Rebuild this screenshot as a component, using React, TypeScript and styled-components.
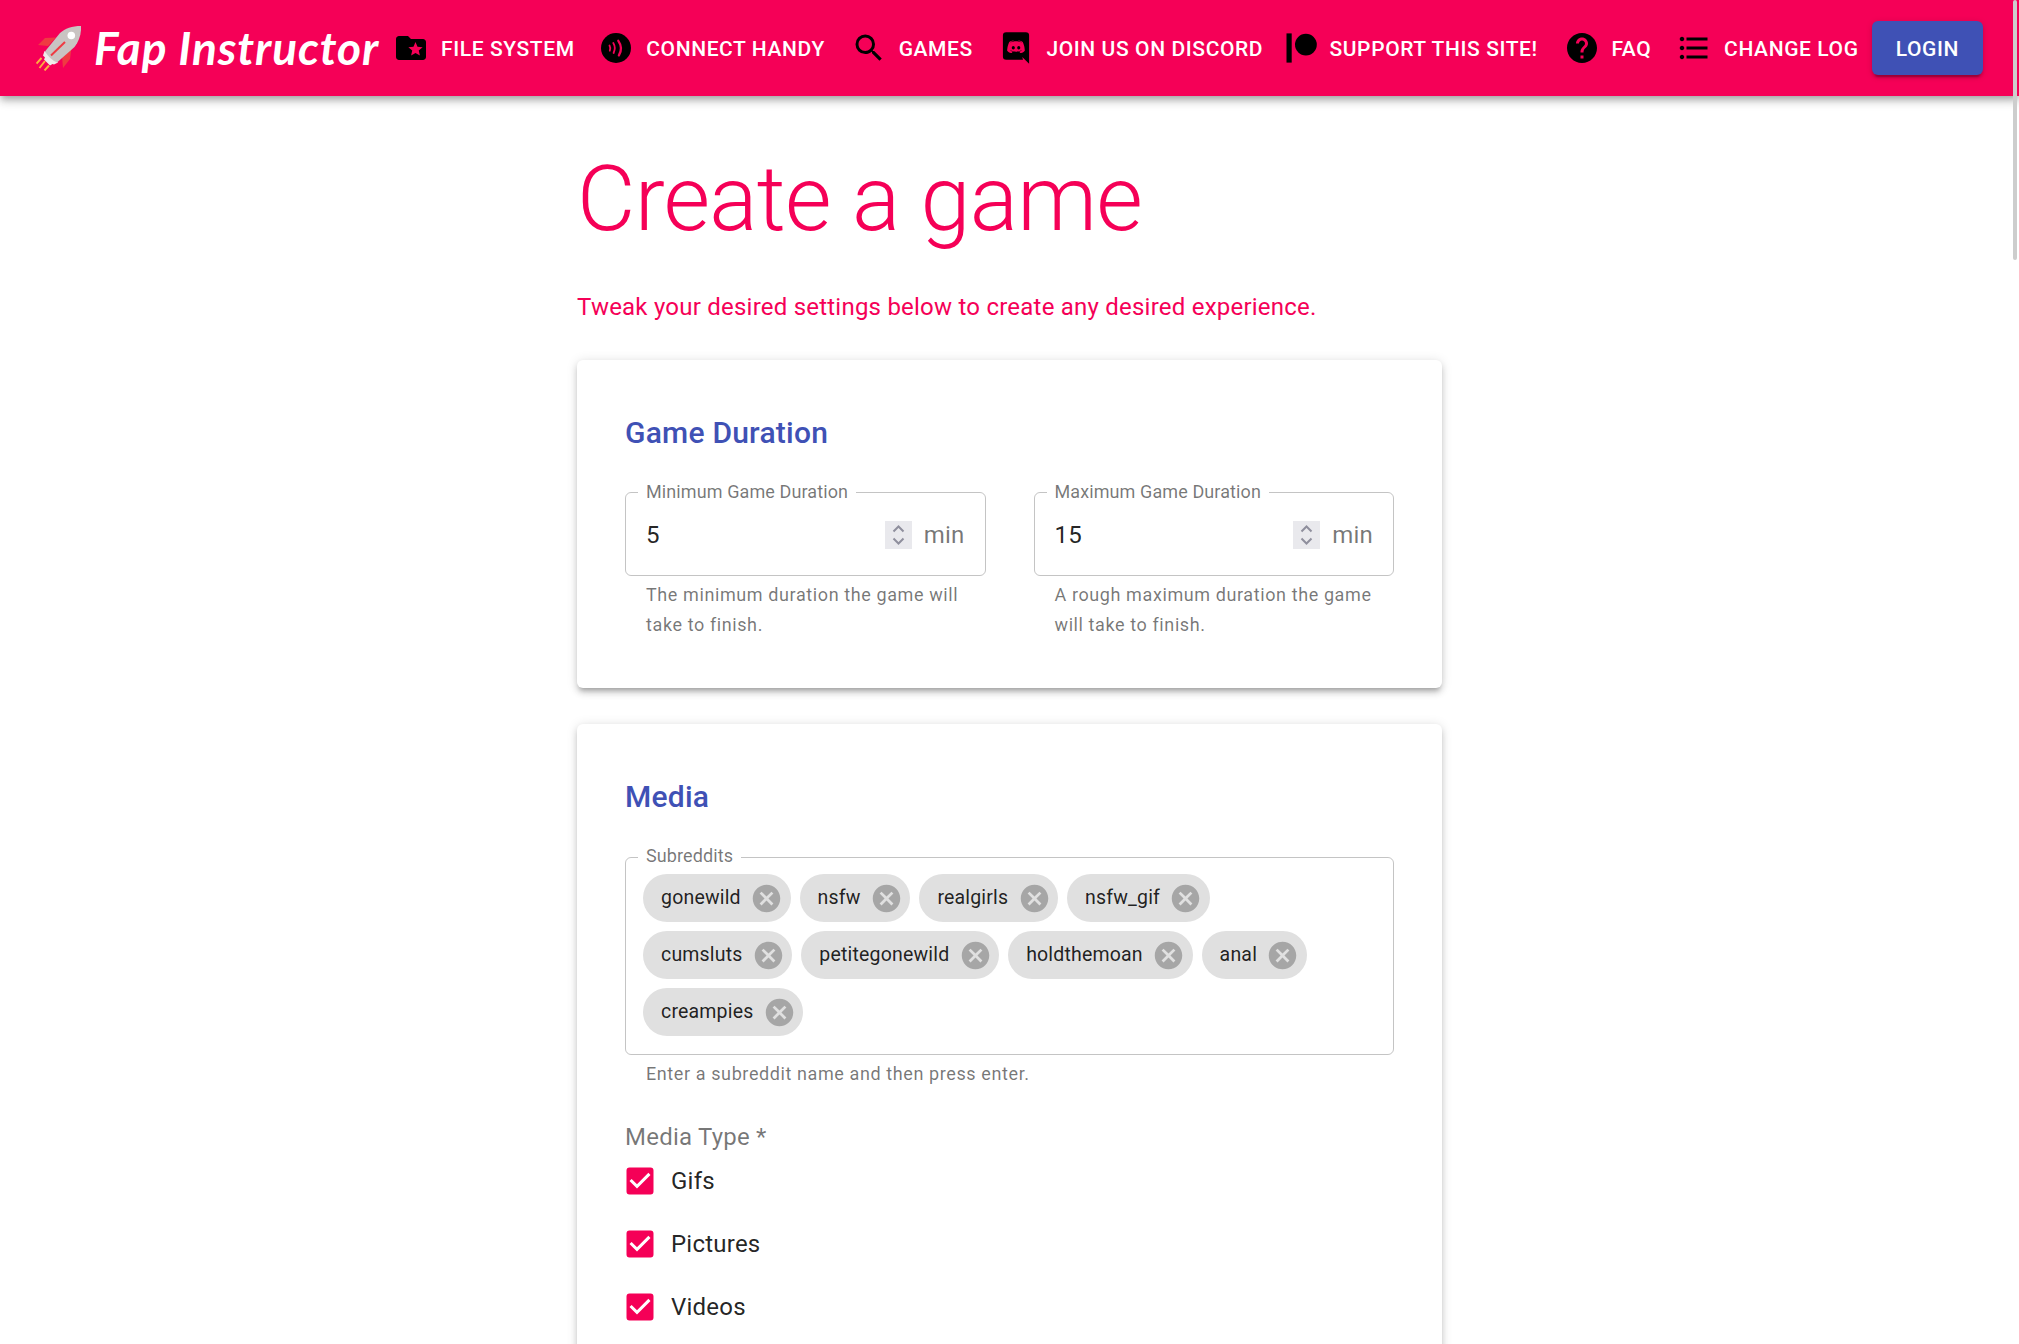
import React from "react";
import styled, { createGlobalStyle } from "styled-components";
import {
  MdFolderSpecial,
  MdSearch,
  MdHelp,
  MdFormatListBulleted,
  MdCheckBox,
  MdCancel,
} from "react-icons/md";

const PINK = "#f50057";
const INDIGO = "#3f51b5";

const GlobalStyle = createGlobalStyle`
  * { box-sizing: border-box; }
  html, body { height: 100%; overflow: hidden; }
  body {
    margin: 0;
    background: #fff;
    color: rgba(0, 0, 0, 0.87);
    font-family: Roboto, "Liberation Sans", sans-serif;
    font-size: 24px;
    line-height: 36px;
    letter-spacing: 0.00938em;
  }
`;

const Page = styled.div`
  height: 1344px;
  overflow: hidden;
`;

const AppBar = styled.header`
  position: relative;
  display: flex;
  align-items: center;
  height: 96px;
  padding: 0 36px;
  background: ${PINK};
  box-shadow: 0 3px 6px -1.5px rgba(0, 0, 0, 0.2), 0 6px 7.5px rgba(0, 0, 0, 0.14),
    0 1.5px 15px rgba(0, 0, 0, 0.12);
`;

const Brand = styled.div`
  display: flex;
  flex: none;
  align-items: center;
  width: 351px;
  height: 96px;
`;

const Rocket = styled.svg`
  flex: none;
  width: 45px;
  height: 45px;
  margin-right: 13px;
`;

const Wordmark = styled.span`
  color: #fff;
  font-family: Lato, "Liberation Sans", sans-serif;
  font-style: italic;
  font-weight: 700;
  font-size: 46px;
  line-height: 60px;
  letter-spacing: 0.9px;
  white-space: nowrap;
`;

const Nav = styled.nav`
  display: flex;
  flex: 1;
  align-items: center;
`;

const NavButton = styled.a<{ $gap: number }>`
  display: flex;
  flex: none;
  align-items: center;
  gap: 12px;
  margin-left: ${(p) => p.$gap}px;
  padding: 0 12px 0 6px;
  color: #fff;
  font-size: 21px;
  font-weight: 500;
  line-height: 36px;
  letter-spacing: 0.02857em;
  text-transform: uppercase;
  white-space: nowrap;

  svg {
    width: 36px;
    height: 36px;
    color: #000;
  }
`;

const NavLabel = styled.span`
  padding-top: 2px;
`;

const Login = styled.button`
  height: 54px;
  margin-left: auto;
  padding: 2px 24px 0;
  border: 0;
  border-radius: 6px;
  background: ${INDIGO};
  color: #fff;
  font: 500 21px/36px Roboto, sans-serif;
  letter-spacing: 0.02857em;
  box-shadow: 0 4.5px 1.5px -3px rgba(0, 0, 0, 0.2), 0 3px 3px rgba(0, 0, 0, 0.14),
    0 1.5px 7.5px rgba(0, 0, 0, 0.12);
`;

const Content = styled.main`
  width: 865px;
  margin: 0 0 0 577px;
  padding-top: 50px;
`;

const Title = styled.h1`
  margin: 0;
  color: ${PINK};
  font-size: 90px;
  font-weight: 300;
  line-height: 108px;
  letter-spacing: -0.00833em;
`;

const Intro = styled.p`
  margin: 35px 0;
  color: ${PINK};
`;

const Card = styled.section`
  margin-bottom: 36px;
  padding: 49px 48px 48px;
  border-radius: 6px;
  background: #fff;
  box-shadow: 0 4.5px 4.5px -3px rgba(0, 0, 0, 0.2), 0 4.5px 6px rgba(0, 0, 0, 0.14),
    0 1.5px 12px rgba(0, 0, 0, 0.12);
`;

const CardTitle = styled.h2`
  margin: 0 0 26px;
  color: ${INDIGO};
  font-size: 30px;
  font-weight: 500;
  line-height: 48px;
  letter-spacing: 0.0075em;
`;

const FieldRow = styled.div`
  display: grid;
  grid-template-columns: 1fr 1fr;
  gap: 48px;
`;

const TagField = styled.div`
  padding-top: 1px;
`;

const Outline = styled.fieldset<{ $height: number }>`
  min-width: 0;
  height: ${(p) => p.$height}px;
  margin: 0;
  padding: 0 12px;
  border: 1px solid rgba(0, 0, 0, 0.23);
  border-radius: 6px;
`;

const Legend = styled.legend<{ $line?: number }>`
  height: 18px;
  padding: 0 8px;
  color: rgba(0, 0, 0, 0.54);
  font-size: 18px;
  line-height: ${(p) => p.$line ?? 18}px;
  letter-spacing: 0.1px;
`;

const NumberRow = styled.div`
  display: flex;
  align-items: center;
  height: 67px;
  padding: 0 8px;
`;

const NumberValue = styled.span`
  flex: 1;
`;

const Stepper = styled.svg`
  width: 27px;
  height: 28px;
  margin-right: 12px;
  background: #e9e9ed;
`;

const Unit = styled.span`
  color: rgba(0, 0, 0, 0.54);
`;

const Helper = styled.p`
  margin: 4px 21px 0;
  color: rgba(0, 0, 0, 0.54);
  font-size: 18px;
  line-height: 30px;
  letter-spacing: 0.03333em;
`;

const Chips = styled.div`
  display: flex;
  flex-wrap: wrap;
  gap: 9px;
  width: 700px;
  padding: 8px 0 0 5px;
`;

const Chip = styled.span`
  display: flex;
  align-items: center;
  height: 48px;
  padding: 0 7.5px 0 18px;
  border-radius: 24px;
  background: #e0e0e0;
  font-size: 19.5px;
  letter-spacing: 0.00938em;

  svg {
    width: 33px;
    height: 33px;
    margin-left: 9.3px;
    color: rgba(0, 0, 0, 0.26);
  }
`;

const GroupLabel = styled.div`
  margin-top: 36px;
  color: rgba(0, 0, 0, 0.54);
  line-height: 24px;
`;

const Option = styled.label`
  display: flex;
  align-items: center;
  gap: 13px;
  height: 63px;
  margin-left: -3px;

  svg {
    width: 36px;
    height: 36px;
    color: ${PINK};
  }
`;

const ScrollThumb = styled.div`
  position: absolute;
  top: 0;
  right: 2px;
  width: 4px;
  height: 260px;
  border-radius: 2px;
  background: #cdcdcd;
`;

const HandyIcon = () => (
  <svg viewBox="0 0 36 36">
    <circle cx="18" cy="18" r="15" fill="#000" />
    <g fill="none" stroke={PINK} strokeWidth="1.8" strokeLinecap="round">
      <path d="M11.500 15.500q1.400 2.500 .3 5.200" />
      <path d="M15.300 13q2.800 4.600 .3 10" />
      <path d="M20.300 10.800q5 7 .6 14.600" strokeWidth="2.300" />
    </g>
  </svg>
);

const DiscordIcon = () => (
  <svg viewBox="-1.75 -1.7 27.5 27.5" fill="#000">
    <path d="M22 24l-5.25-5 .63 2H4.500A2.500 2.500 0 0 1 2 18.500v-16A2.500 2.500 0 0 1 4.500 0h15A2.500 2.500 0 0 1 22 2.500V24M12 6.800c-2.680 0-4.560 1.150-4.560 1.150 1.030-.92 2.830-1.450 2.830-1.450l-.17-.17c-1.690.03-3.220 1.200-3.220 1.200-1.720 3.590-1.610 6.690-1.610 6.690 1.400 1.810 3.480 1.680 3.480 1.680l.71-.9c-1.250-.27-2.040-1.380-2.040-1.380S9.300 14.900 12 14.900s4.580-1.280 4.580-1.280-.79 1.110-2.040 1.380l.71.9s2.080.13 3.480-1.680c0 0 .11-3.100-1.610-6.690 0 0-1.530-1.170-3.220-1.200l-.17.17s1.800.53 2.830 1.450c0 0-1.880-1.150-4.560-1.150m-2.070 3.790c.65 0 1.180.57 1.170 1.270 0 .69-.52 1.270-1.170 1.270-.64 0-1.160-.58-1.160-1.270 0-.7.51-1.270 1.160-1.270m4.170 0c.65 0 1.170.57 1.170 1.270 0 .69-.52 1.270-1.170 1.270-.64 0-1.160-.58-1.160-1.270 0-.7.51-1.270 1.160-1.270z" />
  </svg>
);

const PatreonIcon = () => (
  <svg viewBox="0 0 36 36" fill="#000">
    <rect x="5.5" y="3.4" width="5.2" height="29.2" />
    <circle cx="24.900" cy="14.600" r="10.900" />
  </svg>
);

const RocketIcon = () => (
  <Rocket viewBox="0 0 45 45" fill="none">
    <path d="M20 11.500 9 12 2 19l10 1zM35.500 22 34 33l-7 9-1-12z" fill="#ef3b42" />
    <path d="m8.500 25-1.500 4.500 2 2-1 2 6 6 2.500-1.500 1.500.5 4-2z" fill="#efebea" />
    <path d="M45 0C36 0 29 2.500 24 7L9 25.500q5 8 12 11L38.500 21C43 15 45.500 8 45 0z" fill="#c9c4c2" />
    <circle cx="35.300" cy="9.500" r="3.800" fill="#fff" />
    <path d="M29 16 15 29.500" stroke="#ef3b42" strokeWidth="2" />
    <path
      d="m5.500 32-5 5.500M9 35l-5.500 7M13 39.500l-4.500 5"
      stroke="#fdb03e"
      strokeWidth="1.900"
    />
  </Rocket>
);

const links = [
  { label: "File System", icon: <MdFolderSpecial />, gap: 0 },
  { label: "Connect Handy", icon: <HandyIcon />, gap: 5.6 },
  { label: "Games", icon: <MdSearch />, gap: 7.8 },
  { label: "Join us on Discord", icon: <DiscordIcon />, gap: 7.6 },
  { label: "Support this site!", icon: <PatreonIcon />, gap: 0.3 },
  { label: "FAQ", icon: <MdHelp />, gap: 7.8 },
  { label: "Change Log", icon: <MdFormatListBulleted />, gap: 6.8 },
];

const subreddits = [
  "gonewild",
  "nsfw",
  "realgirls",
  "nsfw_gif",
  "cumsluts",
  "petitegonewild",
  "holdthemoan",
  "anal",
  "creampies",
];

type NumberFieldProps = { label: string; value: number; help: string };

const NumberField = ({ label, value, help }: NumberFieldProps) => (
  <div>
    <Outline $height={93}>
      <Legend>{label}</Legend>
      <NumberRow>
        <NumberValue>{value}</NumberValue>
        <Stepper viewBox="0 0 27 28" fill="none" stroke="#8f8f9d" strokeWidth="2">
          <path d="m8.500 10.500 5-5 5 5M8.500 17.500l5 5 5-5" />
        </Stepper>
        <Unit>min</Unit>
      </NumberRow>
    </Outline>
    <Helper>{help}</Helper>
  </div>
);

export default function App() {
  return (
    <Page>
      <GlobalStyle />
      <AppBar>
        <Brand>
          <RocketIcon />
          <Wordmark>Fap Instructor</Wordmark>
        </Brand>
        <Nav>
          {links.map((link) => (
            <NavButton key={link.label} $gap={link.gap}>
              {link.icon}
              <NavLabel>{link.label}</NavLabel>
            </NavButton>
          ))}
          <Login>LOGIN</Login>
        </Nav>
      </AppBar>
      <Content>
        <Title>Create a game</Title>
        <Intro>Tweak your desired settings below to create any desired experience.</Intro>
        <Card>
          <CardTitle>Game Duration</CardTitle>
          <FieldRow>
            <NumberField
              label="Minimum Game Duration"
              value={5}
              help="The minimum duration the game will take to finish."
            />
            <NumberField
              label="Maximum Game Duration"
              value={15}
              help="A rough maximum duration the game will take to finish."
            />
          </FieldRow>
        </Card>
        <Card>
          <CardTitle>Media</CardTitle>
          <TagField>
            <Outline $height={207}>
              <Legend $line={16}>Subreddits</Legend>
              <Chips>
                {subreddits.map((name) => (
                  <Chip key={name}>
                    {name}
                    <MdCancel />
                  </Chip>
                ))}
              </Chips>
            </Outline>
            <Helper>Enter a subreddit name and then press enter.</Helper>
          </TagField>
          <GroupLabel>Media Type *</GroupLabel>
          {["Gifs", "Pictures", "Videos"].map((name) => (
            <Option key={name}>
              <MdCheckBox />
              {name}
            </Option>
          ))}
        </Card>
      </Content>
      <ScrollThumb />
    </Page>
  );
}
